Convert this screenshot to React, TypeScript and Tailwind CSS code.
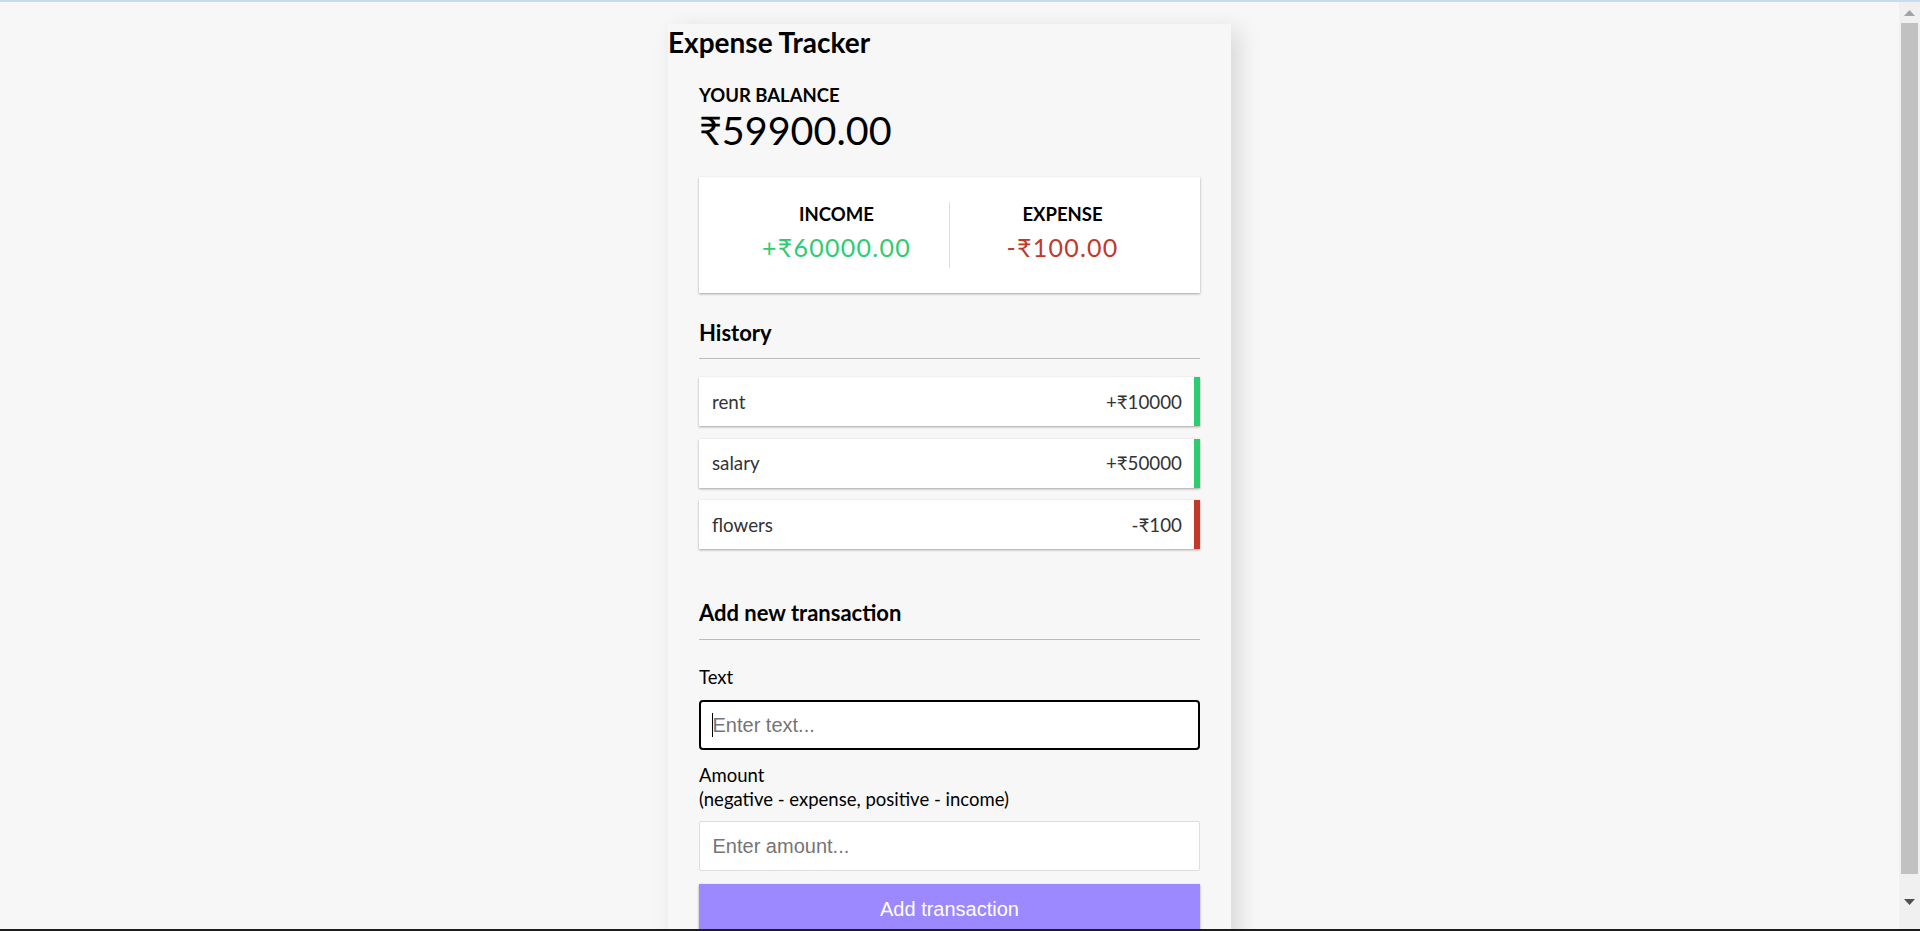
import React from 'react'

// box shadow used on cards, list rows and the button
const cardShadow = 'shadow-[0_1px_3px_rgba(0,0,0,0.12),0_1px_2px_rgba(0,0,0,0.24)]'

interface Transaction {
  id: number
  text: string
  amount: number
}

const transactions: Transaction[] = [
  { id: 1, text: 'rent', amount: 10000 },
  { id: 2, text: 'salary', amount: 50000 },
  { id: 3, text: 'flowers', amount: -100 },
]

function TransactionRow({ t }: { t: Transaction }) {
  const plus = t.amount > 0
  return (
    <li
      className={`flex justify-between bg-white text-[#333] text-[18.75px] leading-[24px] pl-[13px] pr-[12px] py-[12.5px] border-r-[6px] ${cardShadow} ${
        plus ? 'border-[#2ecc71]' : 'border-[#c0392b]'
      }`}
    >
      <span>{t.text}</span>
      <span>
        {plus ? '+' : '-'}₹{Math.abs(t.amount)}
      </span>
    </li>
  )
}

function Scrollbar() {
  return (
    <div className="w-[21px] bg-[#f0f0f0] flex flex-col items-center">
      <div className="h-[21px] flex items-center justify-center">
        <svg width="11" height="6" viewBox="0 0 11 6">
          <path d="M0 6 L5.5 0 L11 6 Z" fill="#a3a3a3" />
        </svg>
      </div>
      <div className="w-[17px] h-[851px] bg-[#c1c1c1]" />
      <div className="flex-1 flex items-center justify-center">
        <svg width="11" height="6" viewBox="0 0 11 6">
          <path d="M0 0 L11 0 L5.5 6 Z" fill="#505050" />
        </svg>
      </div>
    </div>
  )
}

export default function App() {
  const amounts = transactions.map(t => t.amount)
  const total = amounts.reduce((a, b) => a + b, 0).toFixed(2)
  const income = amounts.filter(a => a > 0).reduce((a, b) => a + b, 0).toFixed(2)
  const expense = (amounts.filter(a => a < 0).reduce((a, b) => a + b, 0) * -1).toFixed(2)

  return (
    <div className="h-screen w-full flex flex-col bg-[#f7f7f7] overflow-hidden font-['Lato',sans-serif] text-black">
      <div className="h-[2px] bg-[#c8dbf6]" />
      <div className="flex flex-1 min-h-0">
        <main className="flex-1 overflow-hidden flex justify-center">
          <div className="w-[563px] mt-[22px] self-start bg-[#f7f7f7] shadow-[8px_6px_22px_rgba(0,0,0,0.13)] pb-10">
            <h2 className="text-[28px] font-bold leading-[36px] m-0">Expense Tracker</h2>

            <div className="w-[501px] mx-auto">
              <h4 className="mt-[23px] text-[18.5px] font-bold uppercase leading-[24px]">Your Balance</h4>
              <h1 className="text-[39.5px] font-normal leading-[48px] -mt-[1px]">₹{total}</h1>

              <div className={`flex bg-white mt-[23px] py-[25px] px-[25px] ${cardShadow}`}>
                <div className="flex-1 text-center border-r border-[#dedede]">
                  <h4 className="text-[18.5px] font-bold uppercase leading-[24px]">Income</h4>
                  <p className="text-[25px] leading-[30px] tracking-[1.25px] my-[6px] text-[#2ecc71]">+₹{income}</p>
                </div>
                <div className="flex-1 text-center">
                  <h4 className="text-[18.5px] font-bold uppercase leading-[24px]">Expense</h4>
                  <p className="text-[25px] leading-[30px] tracking-[1.25px] my-[6px] text-[#c0392b]">-₹{expense}</p>
                </div>
              </div>

              <h3 className="mt-[27px] text-[22px] font-bold leading-[26px] pb-[12px] border-b border-[#bbb]">History</h3>
              <ul className="mt-[18px] flex flex-col gap-[12.5px]">
                {transactions.map(t => (
                  <TransactionRow key={t.id} t={t} />
                ))}
              </ul>

              <h3 className="mt-[51px] text-[22px] font-bold leading-[26px] pb-[13px] border-b border-[#bbb]">
                Add new transaction
              </h3>
              <form className="mt-[25px]">
                <label className="block text-[18.5px] leading-[24px]">Text</label>
                <div className="relative mt-[11px]">
                  <input
                    type="text"
                    placeholder="Enter text..."
                    className="block w-full h-[50px] bg-white border-2 border-black rounded-[4px] px-[11.5px] text-[20px] font-['Liberation_Sans',Arial,sans-serif] placeholder:text-[#757575] outline-none"
                  />
                  <span className="absolute left-[13px] top-[13px] w-[1px] h-[24px] bg-black" />
                </div>

                <label className="block mt-[13px] text-[18.5px] leading-[24px]">
                  Amount
                  <br />
                  (negative - expense, positive - income)
                </label>
                <input
                  type="number"
                  placeholder="Enter amount..."
                  className="block w-full mt-[10px] h-[50px] bg-white border border-[#dedede] rounded-[2px] px-[12.5px] text-[20px] font-['Liberation_Sans',Arial,sans-serif] placeholder:text-[#757575] outline-none"
                />
                <button
                  type="button"
                  className={`block w-full mt-[13px] h-[50px] bg-[#9c88ff] text-white text-[20px] font-['Liberation_Sans',Arial,sans-serif] ${cardShadow}`}
                >
                  Add transaction
                </button>
              </form>
            </div>
          </div>
        </main>
        <Scrollbar />
      </div>
      <div className="h-[2px] bg-[#1c1c1c]" />
    </div>
  )
}
